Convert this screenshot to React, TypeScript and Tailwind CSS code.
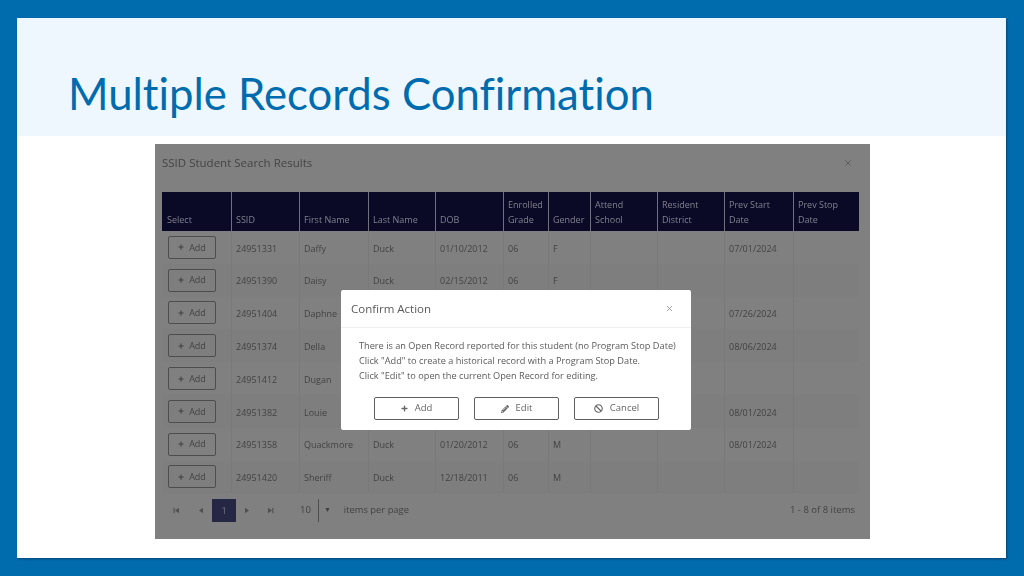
import { X } from 'lucide-react';
import { FaBan, FaPencilAlt, FaPlus } from 'react-icons/fa';

const heads = [
    ['Select'],
    ['SSID'],
    ['First Name'],
    ['Last Name'],
    ['DOB'],
    ['Enrolled', 'Grade'],
    ['Gender'],
    ['Attend', 'School'],
    ['Resident', 'District'],
    ['Prev Start', 'Date'],
    ['Prev Stop', 'Date'],
];

// rows 3-6: the cells behind the dialog can't be read in the picture, so they stay empty
const rows = [
    ['24951331', 'Daffy', 'Duck', '01/10/2012', '06', 'F', '07/01/2024'],
    ['24951390', 'Daisy', 'Duck', '02/15/2012', '06', 'F', ''],
    ['24951404', 'Daphne', '', '', '', '', '07/26/2024'],
    ['24951374', 'Della', '', '', '', '', '08/06/2024'],
    ['24951412', 'Dugan', '', '', '', '', ''],
    ['24951382', 'Louie', '', '', '', '', '08/01/2024'],
    ['24951358', 'Quackmore', 'Duck', '01/20/2012', '06', 'M', '08/01/2024'],
    ['24951420', 'Sheriff', 'Duck', '12/18/2011', '06', 'M', ''],
];

const cols = 'grid grid-cols-[70px_68px_69px_67px_68px_45px_42px_67px_67px_69px_65px]';

function PagerIcon({ dir, bar }: { dir: 'left' | 'right'; bar?: boolean }) {
    return (
        <svg width="7" height="7" viewBox="0 0 7 7" fill="#4f4f4f">
            {dir === 'left' ? <path d="M6 .8v5.4L2 3.5z" /> : <path d="M1 .8v5.4L5 3.5z" />}
            {bar && (dir === 'left' ? <rect x="0.6" y="0.8" width="1.1" height="5.4" /> : <rect x="5.3" y="0.8" width="1.1" height="5.4" />)}
        </svg>
    );
}

function ModalButton({ icon, label }: { icon: React.ReactNode; label: string }) {
    return (
        <button className="flex h-[23px] w-[85px] items-center justify-center gap-[7px] rounded-[2px] border border-[#5f5f5f] bg-white text-[9.5px] text-[#666666]">
            {icon}
            {label}
        </button>
    );
}

export default function App() {
    return (
        <div className="h-[576px] w-[1024px] overflow-hidden bg-[#006cae] pl-[17px] pt-[18px] font-['Open_Sans',sans-serif]">
            <div className="h-[540px] w-[989px] bg-white shadow-[1px_1px_2px_rgba(0,40,70,0.6)]">
                <div className="flex h-[118px] items-end bg-[#eef7fe] pb-[13px] pl-[51px]">
                    <h1 className="font-['Lato',sans-serif] text-[43.7px] leading-[60px] text-[#006cae] [font-variant-ligatures:none]">Multiple Records Confirmation</h1>
                </div>
                <div className="relative ml-[138px] mt-2 h-[395px] w-[715px] bg-[#808080] text-[9px] text-[#424242] blur-[0.5px]">
                    <div className="flex h-[48px] items-center justify-between pb-[11px] pl-[7px] pr-[17px]">
                        <span className="text-[11.5px] text-[#444444]">SSID Student Search Results</span>
                        <X size={10} strokeWidth={1.6} className="text-[#4c4c4c]" />
                    </div>
                    <div className="mx-[7px] w-[697px]">
                        <div className={`${cols} h-[39px] bg-[#0a0a26] text-[#80808f]`}>
                            {heads.map((h) => (
                                <div key={h.join()} className="flex flex-col justify-end border-r border-[#6f7180] pb-[4px] pl-[4px] leading-[15px] first:pl-[5px] last:border-r-0">
                                    {h.map((line) => (
                                        <span key={line}>{line}</span>
                                    ))}
                                </div>
                            ))}
                        </div>
                        {rows.map((r, i) => (
                            <div key={r[0]} className={`${cols} h-[32.8px] ${i % 2 ? 'bg-[#7e7e7e]' : 'bg-[#808080]'}`}>
                                <div className="flex items-center border-r border-[#797979] pl-[6px]">
                                    <button className="flex h-[23px] w-[48px] items-center justify-center gap-[5px] rounded-[2px] border border-[#4d4d4d] text-[9px] text-[#424242]">
                                        <FaPlus size={6} />
                                        Add
                                    </button>
                                </div>
                                {[r[0], r[1], r[2], r[3], r[4], r[5], '', '', r[6], ''].map((v, j) => (
                                    <div key={j} className="flex items-center border-r border-[#797979] pl-[4px] pt-[2px] last:border-r-0">
                                        {v}
                                    </div>
                                ))}
                            </div>
                        ))}
                        <div className="flex h-[40px] items-center justify-between pb-[6px] pr-[4px]">
                            <div className="flex items-center">
                                <div className="flex w-[50px] items-center justify-around pl-[2px]">
                                    <PagerIcon dir="left" bar />
                                    <PagerIcon dir="left" />
                                </div>
                                <span className="flex h-[23px] w-[24px] items-center justify-center bg-[#262645] text-[#77778a]">1</span>
                                <div className="flex w-[46px] items-center justify-around">
                                    <PagerIcon dir="right" />
                                    <PagerIcon dir="right" bar />
                                </div>
                                <span className="ml-[18px] text-[9.5px]">10</span>
                                <span className="ml-[7px] flex h-[23px] items-center border-l border-[#4d4d4d] pl-[5px] text-[7px]">▼</span>
                                <span className="ml-[13px] text-[9.4px]">items per page</span>
                            </div>
                            <span className="text-[9.5px]">1 - 8 of 8 items</span>
                        </div>
                    </div>
                    <div className="absolute left-[186px] top-[146px] h-[140px] w-[350px] rounded-[2px] bg-white text-[#5a5a5a]">
                        <div className="flex h-[38px] items-center justify-between border-b border-[#f0f0f0] pl-[10px] pr-[17px]">
                            <span className="text-[11.5px]">Confirm Action</span>
                            <X size={9} strokeWidth={1.8} className="text-[#777777]" />
                        </div>
                        <div className="pl-[18px] pt-[10px] text-[9.2px] leading-[15px]">
                            <p>There is an Open Record reported for this student (no Program Stop Date)</p>
                            <p>Click "Add" to create a historical record with a Program Stop Date.</p>
                            <p>Click "Edit" to open the current Open Record for editing.</p>
                        </div>
                        <div className="mt-[14px] flex gap-[15px] pl-[33px]">
                            <ModalButton icon={<FaPlus size={7} />} label="Add" />
                            <ModalButton icon={<FaPencilAlt size={8} />} label="Edit" />
                            <ModalButton icon={<FaBan size={9} />} label="Cancel" />
                        </div>
                    </div>
                </div>
            </div>
        </div>
    );
}
